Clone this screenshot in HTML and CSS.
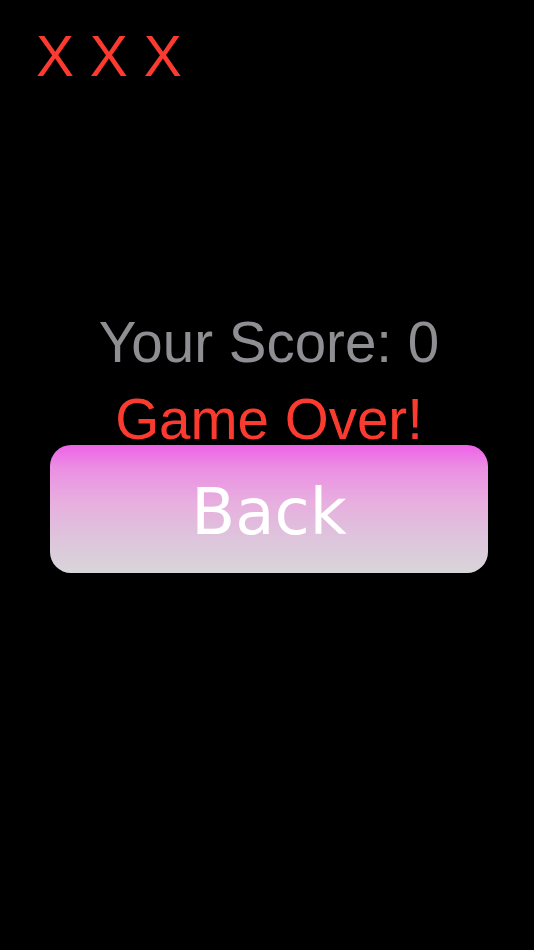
FILE: index.html
```html
<!DOCTYPE html>
<html lang="en">
<head>
<meta charset="utf-8">
<title>Game Over</title>
<link rel="stylesheet" href="styles.css">
</head>
<body>
  <div class="screen">
    <header class="lives">X X X</header>
    <main class="result">
      <p class="score">Your Score: 0</p>
      <p class="status">Game Over!</p>
      <button class="back-btn" type="button">Back</button>
    </main>
  </div>
</body>
</html>
```

FILE: styles.css
```css
html, body {
  margin: 0;
  padding: 0;
  background: #000;
}

.screen {
  width: 534px;
  height: 950px;
  display: flex;
  flex-direction: column;
  font-family: "Liberation Sans", Arial, sans-serif;
}

/* remaining lives */
.lives {
  padding: 23px 0 0 36px;
  font-size: 57px;
  line-height: 66px;
  color: #fb3a30;
}

.result {
  margin-top: 224px;
  padding-left: 4px;
  display: flex;
  flex-direction: column;
  align-items: center;
}

.score,
.status {
  margin: 0;
  font-size: 56.5px;
  line-height: 60px;
  text-align: center;
}

.score {
  color: #8e8e93;
}

.status {
  margin-top: 17px;
  color: #fc3b30;
}

.back-btn {
  margin-top: -5px;
  width: 438px;
  height: 128px;
  border: none;
  border-radius: 21px;
  padding: 6px 0 0;
  display: flex;
  align-items: center;
  justify-content: center;
  background: linear-gradient(180deg, #ee62e8 0%, #eb8fe3 18%, #e7afdf 45%, #ddc6dc 75%, #d8d6d9 100%);
  color: #fff;
  font-family: "DejaVu Sans", Verdana, sans-serif;
  font-size: 64px;
  cursor: pointer;
}
```
